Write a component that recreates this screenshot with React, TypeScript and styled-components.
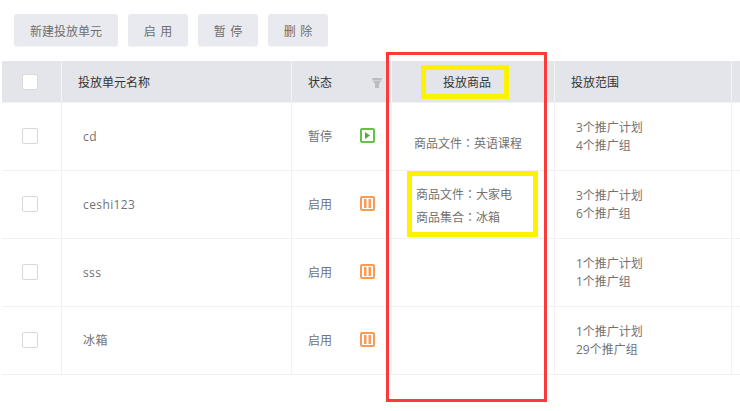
import React from "react";
import styled, { createGlobalStyle } from "styled-components";

const Global = createGlobalStyle`
  html, body { margin: 0; padding: 0; background: #fff; }
  body { font-family: "Open Sans", "Noto Sans CJK SC", sans-serif; font-size: 12px; color: #666; }
`;

const Page = styled.div`
  position: relative;
  width: 740px;
  height: 411px;
  overflow: hidden;
  padding: 14px 0 0 2px;
  box-sizing: border-box;
`;

const Toolbar = styled.div`
  display: flex;
  gap: 10px;
  padding-left: 12px;
  height: 32px;
  margin-bottom: 15px;
`;

const ToolButton = styled.button<{ $w: number }>`
  width: ${(p) => p.$w}px;
  height: 32px;
  border: none;
  border-radius: 3px;
  background: #e9eaef;
  color: #6e6e6e;
  font: 12px "Noto Sans CJK SC", sans-serif;
  word-spacing: 2px;
  padding: 0;
  box-shadow: 0 1px 1px rgba(200, 204, 215, 0.25);
`;

const Row = styled.div<{ $head?: boolean }>`
  display: grid;
  grid-template-columns: 60px 230px 100px 163px 177px 10px;
  height: ${(p) => (p.$head ? 42 : 68)}px;
  width: 740px;
  box-sizing: border-box;
  background: ${(p) => (p.$head ? "#e4e5ea" : "#fff")};
  border-bottom: 1px solid ${(p) => (p.$head ? "#f1f2f4" : "#f0f1f3")};
  color: ${(p) => (p.$head ? "#333" : "#727272")};
`;

const Cell = styled.div<{ $head?: boolean }>`
  display: flex;
  align-items: center;
  box-sizing: border-box;
  border-right: 1px solid ${(p) => (p.$head ? "#f4f4f6" : "#f0f1f3")};
  padding-bottom: ${(p) => (p.$head ? 0 : 1)}px;
  min-width: 0;
  white-space: nowrap;
  font-family: "Noto Sans CJK SC", sans-serif;
`;

const CheckCell = styled(Cell)`
  justify-content: center;
  padding-right: 3px;
`;

const Check = styled.span`
  width: 16px;
  height: 16px;
  box-sizing: border-box;
  background: #fff;
  border: 1px solid #d9d9d9;
  border-radius: 2px;
`;

const NameHead = styled(Cell)`
  padding-left: 16px;
`;

const NameCell = styled(Cell)`
  padding-left: 21px;
  letter-spacing: 0.4px;
  font-family: "Open Sans", "Noto Sans CJK SC", sans-serif;
`;

const StatusCell = styled(Cell)`
  padding-left: 16px;
  justify-content: space-between;
  padding-right: 16px;
  padding-bottom: 3px;
`;

const StatusHead = styled(StatusCell)`
  padding-right: 9px;
  padding-bottom: 0;
`;

const GoodsHead = styled(Cell)`
  justify-content: center;
  padding-right: 12px;
`;

const GoodsCell = styled(Cell)<{ $drop: number; $indent: number }>`
  flex-direction: column;
  align-items: flex-start;
  justify-content: center;
  padding-left: ${(p) => p.$indent}px;
  padding-top: ${(p) => p.$drop}px;
  line-height: 23px;
  font-family: "Noto Sans CJK TC", "Noto Sans CJK SC", sans-serif;
`;

const ScopeHead = styled(Cell)`
  padding-left: 16px;
`;

const ScopeCell = styled(Cell)`
  padding-left: 21px;
  padding-top: 2px;
  line-height: 18px;
  flex-direction: column;
  align-items: flex-start;
  justify-content: center;
  font-family: "Open Sans", "Noto Sans CJK SC", sans-serif;
`;

const StatusIcon = styled.svg`
  width: 15px;
  height: 15px;
  display: block;
`;

const RedFrame = styled.div`
  position: absolute;
  left: 386px;
  top: 52px;
  width: 161px;
  height: 350px;
  box-sizing: border-box;
  border: 3px solid #fb3a3a;
  pointer-events: none;
`;

const YellowFrame = styled.div<{ $x: number; $y: number; $w: number; $h: number }>`
  position: absolute;
  left: ${(p) => p.$x}px;
  top: ${(p) => p.$y}px;
  width: ${(p) => p.$w}px;
  height: ${(p) => p.$h}px;
  box-sizing: border-box;
  border: 5px solid #fff200;
  pointer-events: none;
`;

const Play = () => (
  <StatusIcon viewBox="0 0 15 15">
    <rect x="1" y="1" width="13" height="13" rx="1" fill="none" stroke="#67c04a" strokeWidth="2" />
    <path d="M5 4 L10 7.5 L5 11 Z" fill="#4fae3a" />
  </StatusIcon>
);

const Pause = () => (
  <StatusIcon viewBox="0 0 15 15">
    <rect x="1" y="1" width="13" height="13" rx="1" fill="none" stroke="#fb9a55" strokeWidth="2" />
    <rect x="4" y="3" width="2.5" height="9" fill="#fb9a55" />
    <rect x="8.5" y="3" width="2.5" height="9" fill="#fb9a55" />
  </StatusIcon>
);

const Funnel = styled.svg`
  width: 10px;
  height: 10px;
  display: block;
  margin-top: 2px;
`;

const rows = [
  { name: "cd", status: "暂停", paused: true, goods: ["商品文件：英语课程"], drop: 12, indent: 22, scope: ["3个推广计划", "4个推广组"] },
  { name: "ceshi123", status: "启用", paused: false, goods: ["商品文件：大家电", "商品集合：冰箱"], drop: 2, indent: 24, scope: ["3个推广计划", "6个推广组"] },
  { name: "sss", status: "启用", paused: false, goods: [], drop: 0, indent: 24, scope: ["1个推广计划", "1个推广组"] },
  { name: "冰箱", status: "启用", paused: false, goods: [], drop: 0, indent: 24, scope: ["1个推广计划", "29个推广组"] },
];

export default function App() {
  return (
    <Page>
      <Global />
      <Toolbar>
        <ToolButton $w={104}>新建投放单元</ToolButton>
        <ToolButton $w={60}>启 用</ToolButton>
        <ToolButton $w={60}>暂 停</ToolButton>
        <ToolButton $w={60}>删 除</ToolButton>
      </Toolbar>
      <Row $head>
        <CheckCell $head><Check /></CheckCell>
        <NameHead $head>投放单元名称</NameHead>
        <StatusHead $head>
          状态
          <Funnel viewBox="0 0 10 10">
            <path d="M0 0 H10 L9.4 2.4 H0.6 Z M1 2.9 H9 L7 6 V10 H3 V6 Z" fill="#bcbdc1" />
          </Funnel>
        </StatusHead>
        <GoodsHead $head>投放商品</GoodsHead>
        <ScopeHead $head>投放范围</ScopeHead>
        <Cell $head />
      </Row>
      {rows.map((r) => (
        <Row key={r.name}>
          <CheckCell><Check /></CheckCell>
          <NameCell>{r.name}</NameCell>
          <StatusCell>
            {r.status}
            {r.paused ? <Play /> : <Pause />}
          </StatusCell>
          <GoodsCell $drop={r.drop} $indent={r.indent}>
            {r.goods.map((g) => (
              <div key={g}>{g}</div>
            ))}
          </GoodsCell>
          <ScopeCell>
            {r.scope.map((s) => (
              <div key={s}>{s}</div>
            ))}
          </ScopeCell>
          <Cell />
        </Row>
      ))}
      <RedFrame />
      <YellowFrame $x={421} $y={65} $w={88} $h={34} />
      <YellowFrame $x={407} $y={171} $w={131} $h={66} />
    </Page>
  );
}
